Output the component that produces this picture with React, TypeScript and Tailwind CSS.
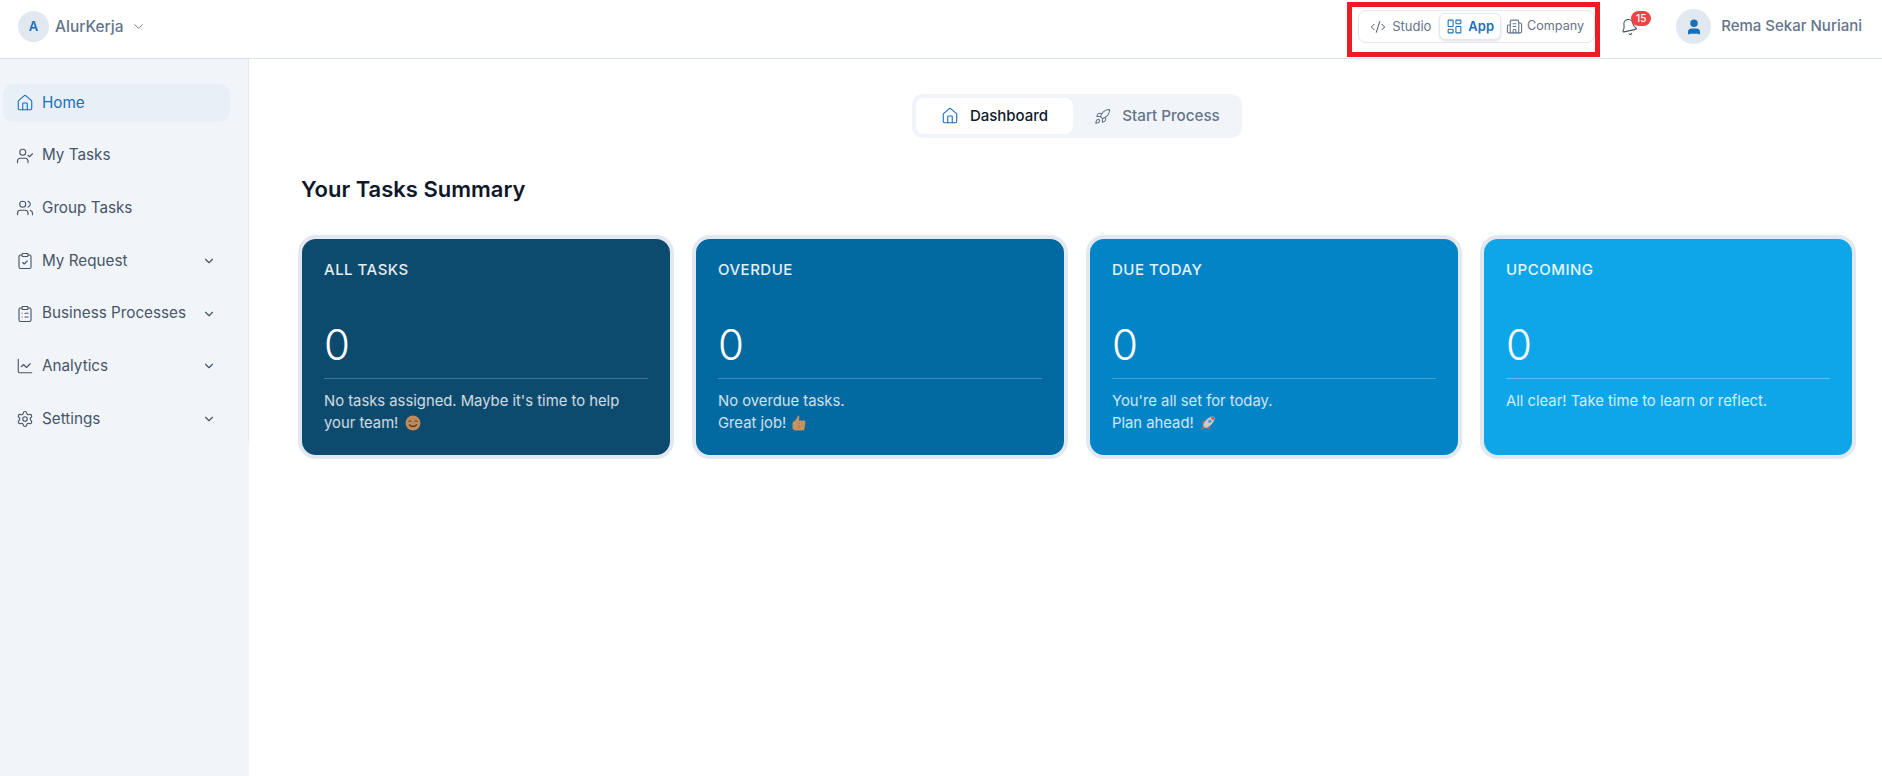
import { Home, UserCheck, Users, ClipboardCheck, ClipboardList, LineChart, Settings, ChevronDown, CodeXml, LayoutDashboard, Building2, Bell, Rocket, User } from "lucide-react";
import type { ReactNode } from "react";

const nav = [
  { label: "Home", icon: Home, active: true },
  { label: "My Tasks", icon: UserCheck },
  { label: "Group Tasks", icon: Users },
  { label: "My Request", icon: ClipboardCheck, chevron: true },
  { label: "Business Processes", icon: ClipboardList, chevron: true },
  { label: "Analytics", icon: LineChart, chevron: true },
  { label: "Settings", icon: Settings, chevron: true },
];

function Smile() {
  return (
    <svg width="16" height="16" viewBox="0 0 16 16" className="inline-block align-[-3px] ml-[2px]">
      <circle cx="8" cy="8" r="7.5" fill="#c08a5a" />
      <path d="M3.500 6.500q1.500-1.500 3 0M9.500 6.500q1.500-1.500 3 0" stroke="#5b3a22" strokeWidth="1" fill="none" />
      <path d="M4 9.500q4 4 8 0" stroke="#5b3a22" strokeWidth="1.200" fill="none" />
    </svg>
  );
}

function Thumb() {
  return (
    <svg width="14" height="16" viewBox="0 0 14 16" className="inline-block align-[-3px] ml-[2px]">
      <path d="M6 .5c1.400 0 1.600 1.500 1.200 3L6.800 5.500H12c1.200 0 1.600 1 1.400 2l-1 6.500c-.2 1-1 1.500-2 1.500H4c-2 0-3.500-1-3.500-3V8.500c0-1 .6-1.700 1.500-2.200C4 5 5 3 6 .5z" fill="#c4935f" />
      <path d="M7 8v6" stroke="#8a5f38" strokeWidth=".8" strokeDasharray="1 1" />
    </svg>
  );
}

function RocketEmoji() {
  return (
    <svg width="16" height="16" viewBox="0 0 16 16" className="inline-block align-[-3px] ml-[2px]">
      <path d="M5.500 5 1.500 6.500 3 9.500zM11 10.500 9.500 14.500 6.500 13z" fill="#c2603f" />
      <ellipse cx="8.800" cy="7.200" rx="7.400" ry="3.500" transform="rotate(-45 8.800 7.200)" fill="#c3c9d2" />
      <path d="M14 2c.2 1.500-.1 2.600-.7 3.600L10.400 2.700C11.400 2.100 12.500 1.800 14 2z" fill="#d0573f" />
      <circle cx="9.800" cy="6.200" r="1.500" fill="#5f8db5" />
      <path d="M3.500 10.500 5.500 12.500 1 15z" fill="#c97a3a" />
    </svg>
  );
}

const cards: { title: string; bg: string; divider: string; lines: ReactNode[] }[] = [
  { title: "ALL TASKS", bg: "bg-[#0c4a6e]", divider: "border-white/25", lines: ["No tasks assigned. Maybe it's time to help", <>your team! <Smile /></>] },
  { title: "OVERDUE", bg: "bg-[#0369a1]", divider: "border-white/25", lines: ["No overdue tasks.", <>Great job! <Thumb /></>] },
  { title: "DUE TODAY", bg: "bg-[#0284c7]", divider: "border-white/25", lines: ["You're all set for today.", <>Plan ahead! <RocketEmoji /></>] },
  { title: "UPCOMING", bg: "bg-[#0ea5e9]", divider: "border-white/30", lines: ["All clear! Take time to learn or reflect."] },
];

export default function App() {
  return (
    <div className="relative flex h-[776px] w-[1882px] flex-col overflow-hidden bg-white font-['Inter',sans-serif]">
      <header className="flex h-[59px] shrink-0 items-center justify-between border-b border-[#d9e3f0] bg-white pb-[5px] pl-[18px] pr-[20px]">
        <div className="flex items-center">
          <div className="flex h-[31px] w-[31px] items-center justify-center rounded-full bg-[#e2e8f0] text-[13px] font-semibold text-[#1a6fb8]">A</div>
          <span className="ml-[6px] text-[15.500px] font-medium text-[#64748b]">AlurKerja</span>
          <ChevronDown className="ml-[7px] h-[15px] w-[15px] text-[#64748b]" strokeWidth={1.5} />
        </div>
        <div className="flex items-center">
          <div className="flex h-[33px] w-[237px] items-center rounded-[8px] border border-[#e2e8f0] bg-white">
            <div className="flex items-center gap-[6px] pl-[11px] pr-[8px] text-[13px] text-[#64748b]">
              <CodeXml className="h-[16px] w-[16px] shrink-0 text-[#475569]" strokeWidth={1.5} />Studio
            </div>
            <div className="flex h-[27px] items-center gap-[5px] rounded-[6px] border border-[#e2e8f0] bg-white px-[6px] text-[13px] font-semibold text-[#1a6fb8] shadow-sm">
              <LayoutDashboard className="h-[17px] w-[17px] shrink-0" strokeWidth={1.5} />App
            </div>
            <div className="flex items-center gap-[4px] pl-[5px] text-[12.600px] text-[#64748b]">
              <Building2 className="h-[17px] w-[17px] shrink-0 text-[#64748b]" strokeWidth={1.5} />Company
            </div>
          </div>
          <div className="relative ml-[24px] flex h-[20px] w-[20px] items-center justify-center">
            <Bell className="h-[18px] w-[18px] -rotate-12 text-[#475569]" strokeWidth={1.5} />
            <span className="absolute left-[12px] top-[-6px] flex h-[15px] w-[20px] items-center justify-center rounded-full bg-[#ef4444] text-[10px] font-medium text-white">15</span>
          </div>
          <div className="ml-[37px] flex h-[35px] w-[35px] items-center justify-center rounded-full bg-[#e2e8f0]">
            <User className="h-[18px] w-[18px] fill-[#1a6fb8] text-[#1a6fb8]" strokeWidth={2} />
          </div>
          <span className="ml-[10px] text-[15px] font-medium text-[#64748b]">Rema Sekar Nuriani</span>
        </div>
      </header>

      <div className="flex min-h-0 flex-1">
        <aside className="w-[249px] shrink-0 bg-[#f1f5f9]">
          <nav className="flex h-[382px] flex-col gap-[14.700px] border-r border-[#e2e8f0] pl-[3px] pr-[18px] pt-[25px]">
            {nav.map((item) => {
              const Icon = item.icon;
              return (
                <div
                  key={item.label}
                  className={`flex h-[38px] shrink-0 items-center rounded-[10px] pl-[13px] pr-[14px] text-[15.250px] ${
                    item.active ? "bg-[#e9eff7] text-[#1a6fb8]" : "text-[#475569]"
                  }`}
                >
                  <Icon className="h-[18px] w-[18px] shrink-0" strokeWidth={1.5} />
                  <span className="ml-[8px] flex-1 whitespace-nowrap">{item.label}</span>
                  {item.chevron && <ChevronDown className="h-[14px] w-[14px] shrink-0" strokeWidth={2} />}
                </div>
              );
            })}
          </nav>
        </aside>

        <main className="min-w-0 flex-1 pl-[49px] pr-[26px]">
          <div className="mt-[35px] flex justify-center">
            <div className="flex h-[44px] w-[330px] items-center rounded-[10px] bg-[#f1f5f9] p-[4px]">
              <div className="flex h-[36px] w-[157px] items-center justify-center gap-[11px] rounded-[8px] bg-white text-[15px] font-medium text-[#0f172a]">
                <Home className="h-[18px] w-[18px] text-[#1a6fb8]" strokeWidth={1.5} />Dashboard
              </div>
              <div className="flex h-[36px] flex-1 items-center justify-center gap-[11px] pl-[3px] text-[15.200px] font-medium text-[#64748b]">
                <Rocket className="h-[17px] w-[17px]" strokeWidth={1.5} />Start Process
              </div>
            </div>
          </div>

          <h1 className="mt-[37px] pl-[3px] text-[22px] font-semibold leading-[28px] text-[#0f172a]">Your Tasks Summary</h1>

          <div className="mt-[32px] grid grid-cols-4 gap-[18px]">
            {cards.map((c) => (
              <div key={c.title} className={`h-[224px] rounded-[18px] border-[4px] border-[#e2e8f0] ${c.bg} px-[22px] pt-[21px] text-white`}>
                <div className="text-[15px] font-medium leading-[20px] tracking-[0.5px] text-white/90">{c.title}</div>
                <div className="mt-[35px] text-[42px] font-light leading-[60px]">0</div>
                <div className={`mt-[3px] border-t ${c.divider}`} />
                <div className="mt-[11px] text-[14.800px] leading-[22px] text-white/80">
                  {c.lines.map((l, i) => (
                    <div key={i} className="whitespace-nowrap">{l}</div>
                  ))}
                </div>
              </div>
            ))}
          </div>
        </main>
      </div>

      <div className="pointer-events-none absolute left-[1347px] top-[2px] h-[55px] w-[253px] border-[5px] border-[#ed1c24]" />
    </div>
  );
}
